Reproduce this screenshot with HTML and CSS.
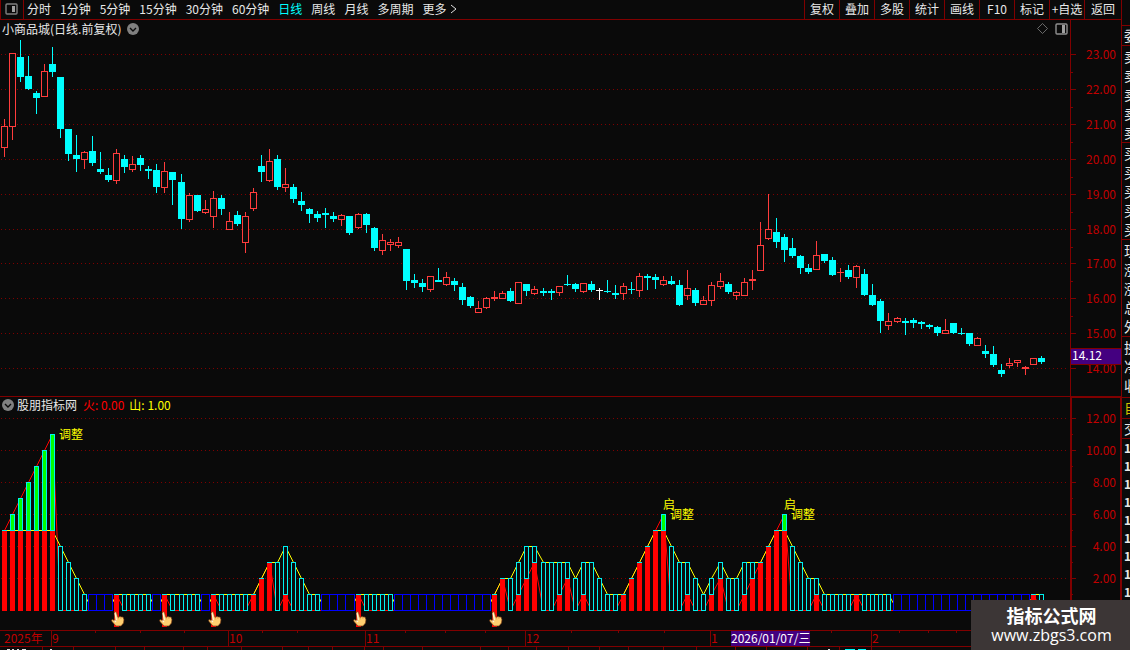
FILE: index.html
```
<!DOCTYPE html>
<html lang="zh-CN">
<head>
  <meta charset="UTF-8" />
  <meta name="viewport" content="width=device-width, initial-scale=1.0"/>
  <title>小商品城 日线</title>
  <link rel="stylesheet" href="styles.css">
</head>
<body>
  <main>
    <nav class="toolbar">
      <button class="layout-btn" aria-label="布局">
        <svg width="13" height="12" viewBox="0 0 13 12"><rect x="1" y="1" width="11" height="10" rx="1" fill="none" stroke="#808080" stroke-width="1.4"/><rect x="7" y="3" width="3" height="6" fill="#a0a0a0"/></svg>
      </button>
      <div class="periods">
        <button>分时</button>
        <button>1分钟</button>
        <button>5分钟</button>
        <button>15分钟</button>
        <button>30分钟</button>
        <button>60分钟</button>
        <button class="active">日线</button>
        <button>周线</button>
        <button>月线</button>
        <button>多周期</button>
        <button class="more">更多
          <svg width="7" height="10" viewBox="0 0 7 10"><path d="M1 1l5 4-5 4" fill="none" stroke="#e0e0e0"/></svg>
        </button>
      </div>
      <div class="tools">
        <button>复权</button>
        <button>叠加</button>
        <button>多股</button>
        <button>统计</button>
        <button>画线</button>
        <button>F10</button>
        <button>标记</button>
        <button>+自选</button>
        <button>返回</button>
      </div>
    </nav>

    <section class="pane price-pane">
      <div class="plot">
        <header>
          <span>小商品城(日线.前复权)</span>
          <button class="round" aria-label="展开"><svg width="12" height="12" viewBox="0 0 12 12"><circle cx="6" cy="6" r="6" fill="#808080"/><path d="M3 5l3 3 3-3" fill="none" stroke="#0a0a0a" stroke-width="1.4"/></svg></button>
          <span class="right-icons">
            <svg width="11" height="11" viewBox="0 0 11 11"><path d="M5.5 .5l5 5-5 5-5-5z" fill="none" stroke="#808080" stroke-width=".8"/></svg>
            <svg width="13" height="12" viewBox="0 0 13 12"><rect x="1" y="1" width="11" height="10" rx="1" fill="none" stroke="#909090" stroke-width="1.4"/><rect x="7" y="2" width="3" height="8" fill="#a0a0a0"/></svg>
          </span>
        </header>
        <svg id="pricePlot" height="357" viewBox="0 39 1070 357" preserveAspectRatio="xMinYMin meet"></svg>
      </div>
      <svg id="priceAxis" class="axis" width="51" height="376" viewBox="1070 20 51 376"></svg>
    </section>

    <section class="pane indicator-pane">
      <div class="plot">
        <header>
          <button class="round" aria-label="展开"><svg width="12" height="12" viewBox="0 0 12 12"><circle cx="6" cy="6" r="6" fill="#808080"/><path d="M3 5l3 3 3-3" fill="none" stroke="#0a0a0a" stroke-width="1.4"/></svg></button>
          <span>股朋指标网</span>
          <span class="fire">火: 0.00</span>
          <span class="hill">山: 1.00</span>
        </header>
        <svg id="indicatorPlot" height="216" viewBox="0 414 1070 216" preserveAspectRatio="xMinYMin meet"></svg>
      </div>
      <svg id="indicatorAxis" class="axis" width="51" height="233" viewBox="1070 397 51 233"></svg>
    </section>

    <svg id="timeAxis" class="time-axis" height="20" viewBox="0 630 1121 20" preserveAspectRatio="xMinYMin meet"></svg>
  </main>

  <aside class="quote">
    <ul class="single"><li>委</li></ul>
    <ul><li>卖</li><li>卖</li><li>卖</li><li>卖</li><li>卖</li></ul>
    <ul><li>买</li><li>买</li><li>买</li><li>买</li><li>买</li></ul>
    <ul><li>现</li><li>涨</li><li>涨</li><li>总</li><li>外</li></ul>
    <ul class="fin"><li>换</li><li>净</li><li>收</li></ul>
    <ul class="single tab"><li>自</li></ul>
    <ul class="single"><li>交</li></ul>
    <ul class="ticks"><li>1</li><li>1</li><li>1</li><li>1</li><li>1</li><li>1</li><li>1</li><li>1</li><li>1</li></ul>
  </aside>

  <div class="watermark">
    <strong>指标公式网</strong>
    <span>www.zbgs3.com</span>
  </div>

  <script>
    const NS = 'http://www.w3.org/2000/svg';
    const LINE = '#800000', RED = '#ff3c3c', CYAN = '#00ffff', BG = '#0a0a0a';

    function add(parent, tag, attrs, text) {
      const el = document.createElementNS(NS, tag);
      for (const k in attrs) el.setAttribute(k, attrs[k]);
      if (text) el.textContent = text;
      parent.appendChild(el);
      return el;
    }
    function rect(parent, x, y, w, h, fill) {
      return add(parent, 'rect', { x: x, y: y, width: w, height: h, fill: fill });
    }
    function box(parent, x, y, w, h, stroke, fill) {
      rect(parent, x, y, w, h, stroke);
      if (w > 2 && h > 2) rect(parent, x + 1, y + 1, w - 2, h - 2, fill);
    }
    function label(parent, x, y, text, cls) {
      add(parent, 'text', { x: x, y: y, class: cls }, text);
    }
    // centre of bar i
    function barX(i) { return 4 + Math.floor(i * 8.0449 + 0.03); }

    // type (u = up, d = down, n = flat), high, body top, body bottom, low
    const candles = `
      u119,126,148,157 u53,53,127,140 d40,57,77,82 d56,76,89,90 d91,93,98,114 u64,71,97,97
      d47,64,72,77 d77,77,129,138 d129,129,154,161 d135,155,159,172 u151,152,160,169 d136,151,163,166
      d152,169,172,174 d168,175,180,182 u149,153,181,184 d155,159,167,173 u156,164,170,172 d155,158,165,171
      d166,169,171,179 d164,170,187,193 u162,171,188,193 d172,172,180,205 d174,182,219,229 u193,195,220,222
      d195,195,211,212 u200,209,213,214 u191,198,217,228 d195,198,209,215 u212,221,230,230 d211,215,224,226
      u212,216,243,253 u188,192,209,211 d155,166,172,182 u149,161,181,182 d155,159,187,190 u168,184,188,192
      d184,187,199,203 d192,201,205,211 d208,209,214,223 d211,214,218,222 d208,213,215,228 d212,216,219,222
      u214,215,220,226 d216,216,233,235 u213,214,228,229 d213,214,225,233 d227,228,248,251 u234,240,251,255
      u239,242,245,251 u237,242,246,248 d249,249,281,290 d274,280,283,288 d279,283,287,292 u276,276,290,292
      d268,280,282,282 u272,277,285,286 d278,281,285,291 d283,287,300,305 d296,297,306,308 u301,308,313,313
      u297,298,308,309 u291,297,299,301 u291,293,299,299 d288,291,301,302 u282,282,304,304 d284,284,291,296
      u286,289,294,295 d288,291,293,296 d289,291,293,300 u286,286,293,296 d275,284,285,286 d283,284,289,292
      u283,283,292,293 d281,284,290,292 n288,290,291,300 d280,291,292,293 d285,293,295,299 u283,286,294,300
      d282,289,290,294 u273,276,291,297 d274,276,278,290 d274,277,280,289 u276,280,285,286 d276,281,284,285
      d280,285,305,306 u270,288,296,300 d288,290,303,306 u296,300,305,305 u282,285,301,306 u273,281,287,289
      d282,284,292,294 u291,292,296,300 u278,282,296,296 u270,279,281,290 u222,245,271,271 u194,229,239,240
      d218,232,242,248 d234,237,250,262 d238,248,256,258 d255,256,268,274 d264,268,272,274 u241,255,270,270
      d254,254,261,263 d257,260,275,276 u268,272,273,282 d265,270,277,279 u265,266,278,288 d269,274,295,296
      d284,295,305,306 d299,301,321,333 u313,321,326,330 u317,318,322,323 d318,321,323,335 d318,320,323,328
      d321,322,324,329 d324,325,327,329 d326,327,333,336 u319,330,334,334 d323,323,333,334 d328,333,334,335
      d333,333,344,346 u337,338,346,346 d345,351,354,358 d346,354,365,367 d364,370,374,377 u358,363,366,368
      u360,360,363,367 u366,367,369,375 u358,358,365,365 d356,358,362,364`.trim().split(/\s+/);

    // hill value followed by fire value, "b" = idle bar, "h" = start signal
    const bars = `
      55 56 57 58 59 5a 5b 40 30 20 10 b b b h 10 10 10 10 b h 10 10 10 10 b h 10 10 10 10
      11 22 33 30 41 30 20 10 10 b b b b h 10 10 10 10 b b b b b b b b b b b b h
      22 20 31 42 43 30 30 31 32 20 31 30 20 10 10 11 22 33 44 55 56 40 30 31 20 10
      21 32 20 20 31 32 33 44 55 56 40 30 20 21 10 10 10 10 11 10 10 10 10
      b b b b b b b b b b b b b b b b b h 10`.trim().split(/\s+/);

    function drawGrid(svg, rows) {
      rows.forEach(y => add(svg, 'path', { d: `M1 ${y}.5H1067`, stroke: LINE, 'stroke-dasharray': '1 3' }));
    }

    function drawPrice() {
      const svg = document.getElementById('pricePlot');
      drawGrid(svg, [54, 89, 124, 159, 194, 229, 263, 298, 333, 368]);
      candles.forEach((c, i) => {
        const x = barX(i);
        const [high, top, bottom, low] = c.slice(1).split(',').map(Number);
        const color = { u: RED, d: CYAN, n: '#ffffff' }[c[0]];
        rect(svg, x, high, 1, low - high, color);
        if (c[0] === 'u') box(svg, x - 3, top, 7, bottom - top, color, BG);
        else rect(svg, x - 3, top, 7, bottom - top, color);
      });
    }

    function drawPriceAxis() {
      const svg = document.getElementById('priceAxis');
      rect(svg, 1070, 20, 1, 376, LINE);
      [54, 89, 124, 159, 194, 229, 263, 298, 333, 368].forEach((y, i) => {
        rect(svg, 1071, y, 5, 1, LINE);
        if (i < 9) rect(svg, 1071, y + 18, 2, 1, LINE);
        label(svg, 1116, y + 5, (23 - i).toFixed(2), 'scale');
      });
      rect(svg, 1071, 348, 50, 17, LINE);
      rect(svg, 1071, 349, 50, 15, '#440080');
      label(svg, 1072, 360, '14.12', 'tag');
    }

    function drawHand(svg, x) {
      const g = add(svg, 'g', { transform: `translate(${x - 5} 611)` });
      add(g, 'path', { d: 'M3.5 1.5Q4.5 0 5.5 1.5L7 6.5 9 5.5 10.5 6 12 6Q13.5 8 12.5 12L10 15H5L1 10.5Q0 8.5 1.5 8.5L4 10Z', fill: '#ffcf70', stroke: '#7a3c14', 'stroke-width': '.7' });
      add(g, 'path', { d: 'M4 2l1.5 7M3.5 9.5L5 11', fill: 'none', stroke: '#fff3d8', 'stroke-width': '1.2' });
      add(g, 'path', { d: 'M7 6.5l.7 2M9.5 6l.5 2', fill: 'none', stroke: '#e09a45', 'stroke-width': '.7' });
    }

    function drawIndicator() {
      const svg = document.getElementById('indicatorPlot');
      const rowY = v => 610 - 16 * v;
      const hill = bars.map(b => b === 'b' ? 0 : b === 'h' ? 1 : parseInt(b[0], 16));
      const fire = bars.map(b => b === 'b' ? 0 : b === 'h' ? 1 : parseInt(b[1], 16));
      drawGrid(svg, [418, 450, 482, 514, 546, 578]);
      const line = (vals, color) => add(svg, 'polyline', {
        points: vals.map((v, i) => `${barX(i) + 0.5},${rowY(v) + 0.5}`).join(' '),
        fill: 'none', stroke: color
      });
      line(fire, '#ff0000');
      line(hill, '#ffff00');
      bars.forEach((b, i) => {
        const x = barX(i);
        if (b === 'b') {
          box(svg, x - 4, 594, barX(i + 1) - x + 1, 17, '#0000ff', BG);
          return;
        }
        const f = fire[i], m = hill[i];
        if (m > f) box(svg, x - 2, rowY(m), 5, rowY(f) - rowY(m) + 1, '#00f0f0', BG);
        if (f > 0) {
          const top = Math.min(f, m);
          rect(svg, x - 2, rowY(top), 5, 16 * top + 1, '#ff0000');
          rect(svg, x - 2, rowY(top), 5, 1, '#00f0f0');
        }
        if (f > m) box(svg, x - 2, rowY(f), 5, 16 * (f - m) + 1, '#00f0f0', '#00ff00');
        if (b === 'h') {
          rect(svg, x - 2, 610, 5, 17, '#ff0000');
          drawHand(svg, x);
        }
      });
      label(svg, 59, 439, '调整', 'mark');
      label(svg, 663, 509, '启', 'mark');
      label(svg, 670, 519, '调整', 'mark');
      label(svg, 784, 509, '启', 'mark');
      label(svg, 791, 519, '调整', 'mark');
    }

    function drawIndicatorAxis() {
      const svg = document.getElementById('indicatorAxis');
      rect(svg, 1070, 397, 51, 1, LINE);
      rect(svg, 1070, 397, 2, 233, LINE);
      rect(svg, 1120, 397, 1, 233, LINE);
      [418, 450, 482, 514, 546, 578].forEach((y, i) => {
        rect(svg, 1072, y, 4, 1, LINE);
        rect(svg, 1072, y + 16, 1, 1, LINE);
        label(svg, 1116, y + 5, (12 - 2 * i).toFixed(2), 'scale');
      });
    }

    function drawTimeAxis() {
      const svg = document.getElementById('timeAxis');
      rect(svg, 0, 630, 1121, 1, LINE);
      rect(svg, 0, 646, 1121, 1, LINE);
      label(svg, 4, 643, '2025年', 'month');
      [[51, '9'], [228, '10'], [365, '11'], [525, '12'], [710, '1'], [871, '2']].forEach(([x, t]) => {
        rect(svg, x, 631, 1, 15, LINE);
        label(svg, x + 1, 643, t, 'month');
      });
      [95, 140, 184, 262, 297, 405, 445, 485, 571, 618, 664, 831, 899, 928, 956].forEach(x => rect(svg, x, 631, 1, 2, LINE));
      [42, 73, 115, 144, 183, 207, 241, 282, 308, 332, 364, 383, 422, 480, 508, 536, 568, 599, 628, 663, 696, 735, 766, 807, 839, 871]
        .forEach(x => rect(svg, x, 647, 1, 3, LINE));
      // tops of the index ticker below
      add(svg, 'path', { d: 'M7 649.5h3M12 649.5h2M17 649.5h2M22 649.5h4M50 649.5h2M828 649.5h2', stroke: '#e0e0e0' });
      add(svg, 'path', { d: 'M845 649.5h10M858 649.5h8', stroke: CYAN });
      rect(svg, 731, 631, 79, 15, '#440080');
      label(svg, 731, 643, '2026/01/07/三', 'tag');
    }

    drawPrice();
    drawPriceAxis();
    drawIndicator();
    drawIndicatorAxis();
    drawTimeAxis();
  </script>
</body>
</html>
```
FILE: styles.css
```
:root {
  --bg: #0a0a0a;
  --line: #800000;
  --text: #e8e8e8;
  --cyan: #00ffff;
  --scale: #c00000;
}
* { box-sizing: border-box; }
body {
  margin: 0; background: var(--bg); color: var(--text); display: flex; min-height: 100vh; overflow: hidden;
  font: 12px/18px "Noto Sans CJK SC", sans-serif;
}
main { flex: 1; min-width: 0; }
svg { display: block; }
button {
  background: none; border: none; padding: 0; margin: 0; color: inherit; font: inherit; cursor: pointer;
  white-space: nowrap;
}

.toolbar { display: flex; height: 20px; border-bottom: 1px solid var(--line); }
.toolbar button { padding-bottom: 2px; }
.toolbar .layout-btn {
  width: 24px; border-left: 1px solid var(--line); border-right: 1px solid var(--line);
  display: flex; align-items: center; padding-left: 4px;
}
.periods { display: flex; gap: 9px; padding-left: 3px; flex: 1; }
.periods .active { color: var(--cyan); }
.periods .more { display: flex; align-items: center; gap: 4px; }
.tools { display: flex; }
.tools button { width: 35px; border-left: 1px solid var(--line); text-align: center; }
.tools button:last-child { width: 37px; }

.pane { display: flex; border-bottom: 1px solid var(--line); }
.plot { flex: 1; min-width: 0; }
.plot header { display: flex; align-items: center; height: 19px; padding: 0 0 2px 2px; gap: 6px; }
.plot > svg { width: 100%; }
.right-icons { display: flex; align-items: center; gap: 7px; margin-left: auto; padding-right: 2px; }
.axis { flex-shrink: 0; }

.indicator-pane { border-bottom: none; }
.indicator-pane .plot header { height: 17px; gap: 3px; }
.indicator-pane .fire { color: #ff0000; margin-left: 3px; }
.indicator-pane .hill { color: #ffff00; margin-left: 2px; }

.time-axis { width: 100%; }
text { font-size: 12px; }
.scale { fill: var(--scale); text-anchor: end; }
.month { fill: var(--scale); }
.mark { fill: #ffff00; }
.tag { fill: #ffffff; }

.quote {
  width: 9px; height: 650px; overflow: hidden; border-left: 1px solid var(--line); padding-top: 25px;
  font-size: 14px; line-height: 19px;
}
.quote ul { list-style: none; margin: 0; padding: 1px 0 0 2px; border-top: 1px solid var(--line); width: 20px; }
.quote .single { padding-top: 0; }
.quote .fin { padding-bottom: 2px; }
.quote .tab { color: #d0c000; padding-bottom: 1px; }
.quote .ticks { font: bold 12px/18px "Noto Sans CJK SC", sans-serif; padding-top: 0; }

.watermark {
  position: absolute; right: 0; bottom: 0; width: 159px; height: 50px; background: #3c3636; color: #ffffff;
  display: flex; flex-direction: column; align-items: center; padding: 5px 0 0 2px;
}
.watermark strong { font-size: 18px; line-height: 20px; }
.watermark span { font: 16px/20px "Open Sans", sans-serif; }
```
